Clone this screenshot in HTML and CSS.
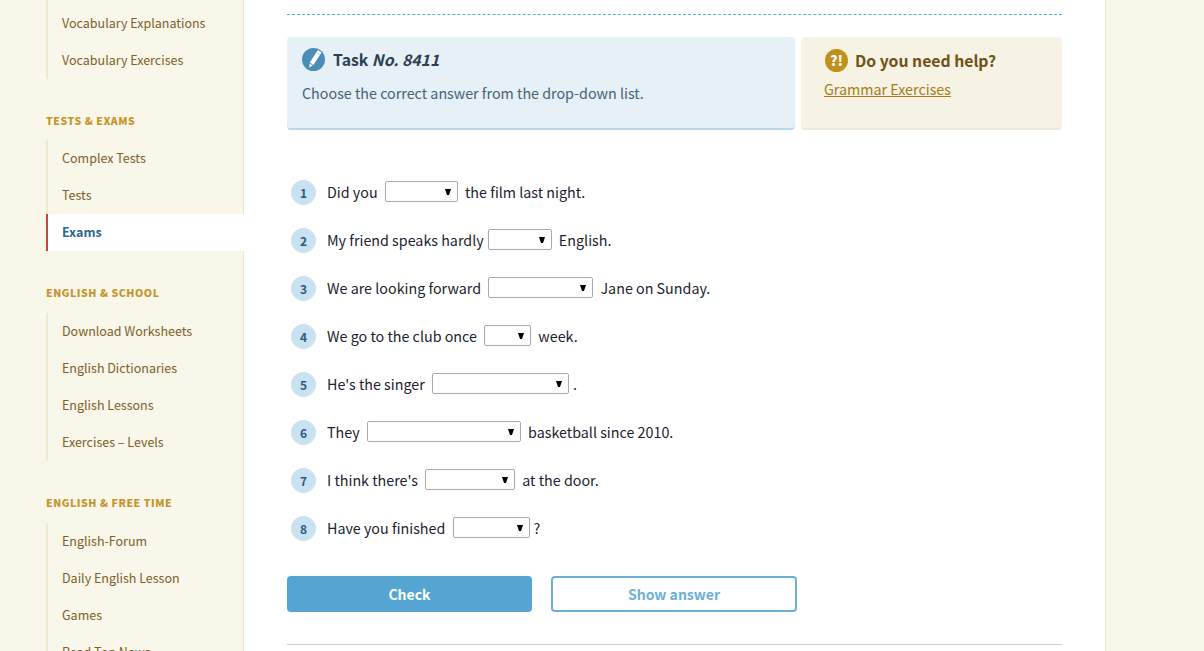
FILE: index.html
```html
<!DOCTYPE html>
<html lang="en">
<head>
<meta charset="utf-8">
<title>Task No. 8411</title>
<link rel="stylesheet" href="styles.css">
</head>
<body>
<div class="page">
  <nav class="sidebar">
    <ul class="menu menu-first">
      <li><a href="#">Vocabulary Explanations</a></li>
      <li><a href="#">Vocabulary Exercises</a></li>
    </ul>
    <h2 class="menu-title">Tests &amp; Exams</h2>
    <ul class="menu">
      <li><a href="#">Complex Tests</a></li>
      <li><a href="#">Tests</a></li>
      <li class="active"><a href="#">Exams</a></li>
    </ul>
    <h2 class="menu-title">English &amp; School</h2>
    <ul class="menu">
      <li><a href="#">Download Worksheets</a></li>
      <li><a href="#">English Dictionaries</a></li>
      <li><a href="#">English Lessons</a></li>
      <li><a href="#">Exercises – Levels</a></li>
    </ul>
    <h2 class="menu-title menu-title-last">English &amp; Free Time</h2>
    <ul class="menu">
      <li><a href="#">English-Forum</a></li>
      <li><a href="#">Daily English Lesson</a></li>
      <li><a href="#">Games</a></li>
      <li><a href="#">Read Top News</a></li>
    </ul>
  </nav>
  <main class="main">
    <div class="dashed"></div>
    <div class="cards">
      <section class="card task">
        <h1 class="card-title">
          <svg class="icon" viewBox="0 0 23 23" aria-hidden="true">
            <circle cx="11.5" cy="11.5" r="11.5" fill="#4a8db7"/>
            <path d="M15.85 2.1l3.7 2.4-8.1 12.5-3.7-2.4z" fill="#fff"/>
            <path d="M7.6 15.6l3 2-3.3 1.9z" fill="#fff"/>
            <path d="M14.6 4.7l3.4 2.2" stroke="#a9cbe0" stroke-width="0.7" fill="none"/>
          </svg>
          <span>Task <i>No. 8411</i></span>
        </h1>
        <p class="task-text">Choose the correct answer from the drop-down list.</p>
      </section>
      <aside class="card help">
        <h2 class="help-title"><span class="help-icon">?!</span>Do you need help?</h2>
        <a class="help-link" href="#">Grammar Exercises</a>
      </aside>
    </div>
    <ol class="questions">
      <li><span class="num">1</span><p>Did you <select class="s73"><option></option></select> the film last night.</p></li>
      <li><span class="num">2</span><p>My friend speaks hardly<select class="s64"><option></option></select> English.</p></li>
      <li><span class="num">3</span><p>We are looking forward <select class="s105"><option></option></select> Jane on Sunday.</p></li>
      <li><span class="num">4</span><p>We go to the club once <select class="s47"><option></option></select> week.</p></li>
      <li><span class="num">5</span><p>He's the singer <select class="s137"><option></option></select>.</p></li>
      <li><span class="num">6</span><p>They <select class="s154"><option></option></select> basketball since 2010.</p></li>
      <li><span class="num">7</span><p>I think there's <select class="s90"><option></option></select> at the door.</p></li>
      <li><span class="num">8</span><p>Have you finished <select class="s77"><option></option></select>?</p></li>
    </ol>
    <div class="actions">
      <button class="btn btn-primary" type="button">Check</button>
      <button class="btn btn-outline" type="button">Show answer</button>
    </div>
    <hr class="rule">
  </main>
  <div class="aside-space"></div>
</div>
</body>
</html>
```
FILE: styles.css
```css
* { box-sizing: border-box; }
html, body { margin: 0; height: 651px; overflow: hidden; }
body {
  background: #f9f6ea;
  font-family: "Noto Sans CJK SC", "Noto Sans", sans-serif;
  color: #1c2230;
}
.page { display: flex; align-items: stretch; height: 651px; }

.sidebar {
  width: 244px;
  flex: none;
  padding-left: 46px;
  border-right: 1px solid #ebe5d3;
}
.menu {
  list-style: none;
  margin: 0;
  padding: 0;
  border-left: 2px solid #f0e9cf;
}
.menu-first { padding-top: 5px; }
.menu li { height: 37px; display: flex; align-items: center; padding: 0 0 2px 14px; }
.menu a { color: #7b6128; text-decoration: none; font-size: 12.5px; line-height: 35px; }
.menu li.active {
  background: #fff;
  border-left: 2px solid #c9463f;
  margin-left: -2px;
  margin-right: -1px;
}
.menu li.active a { color: #2f6391; font-weight: 700; }
.menu-title {
  margin: 32px 0 9.4px;
  font-size: 10.5px;
  line-height: 20px;
  font-weight: 900;
  letter-spacing: 0.55px;
  text-transform: uppercase;
  color: #c4952c;
}
.menu-title-last { margin: 32.2px 0 10px; }

.main {
  width: 862px;
  flex: none;
  background: #fff;
  padding: 14px 43px 0;
  border-right: 1px solid #ebe5d3;
}
.dashed { border-top: 1px dashed #4db0e0; height: 1px; }
.cards { display: flex; gap: 6px; margin-top: 22px; }
.card { height: 93px; border-radius: 4px; border-bottom: 2px solid; }
.task { width: 508px; background: #e5f0f7; border-color: #b9d8ec; padding: 11px 15px; }
.help { width: 261px; background: #f6f2e4; border-color: #f0e9d5; padding: 12px 23px; }
.card-title {
  display: flex;
  align-items: center;
  gap: 8px;
  margin: 0;
  font-size: 15.75px;
  line-height: 23px;
  font-weight: 700;
  color: #2a4052;
}
.icon { width: 23px; height: 23px; flex: none; }
.task-text { margin: 10px 0 0; font-size: 14.3px; line-height: 24px; color: #466272; }
.help-title {
  display: flex;
  align-items: center;
  gap: 7px;
  margin: 0;
  font-size: 15.75px;
  line-height: 23px;
  font-weight: 700;
  color: #6f5314;
}
.help-icon {
  width: 23px;
  height: 23px;
  margin-left: 1px;
  border-radius: 50%;
  background: #bf9118;
  color: #fff;
  font-size: 14px;
  font-weight: 900;
  line-height: 23px;
  text-align: center;
}
.help-link { display: inline-block; margin-top: 7px; font-size: 14.3px; line-height: 20px; color: #a67c14; text-decoration: underline; }

.questions { list-style: none; margin: 38px 0 0; padding: 0 0 0 4px; }
.questions li { display: flex; align-items: center; gap: 11px; height: 48px; }
.questions p { margin: 0; font-size: 14.3px; line-height: 24px; white-space: nowrap; }
.num {
  width: 25px;
  height: 25px;
  flex: none;
  border-radius: 50%;
  background: #c9e2f1;
  color: #2d5b7e;
  font-size: 12px;
  font-weight: 700;
  line-height: 25px;
  text-align: center;
}
select {
  appearance: none;
  height: 21px;
  margin: 0 4px;
  padding: 0;
  vertical-align: 2px;
  background: #fff url("data:image/svg+xml,%3Csvg xmlns='http://www.w3.org/2000/svg' width='6' height='6'%3E%3Cpath d='M0 0h6L4 6H2z' fill='%23000'/%3E%3C/svg%3E") no-repeat right 6px center;
  border: 1px solid #a9a9a9;
  border-radius: 2px;
  font-size: 13px;
}
.s47 { width: 47px; }
.s64 { width: 64px; }
.s73 { width: 73px; }
.s77 { width: 77px; }
.s90 { width: 90px; }
.s105 { width: 105px; }
.s137 { width: 137px; }
.s154 { width: 154px; }

.actions { display: flex; gap: 19px; margin-top: 24px; }
.btn {
  width: 245px;
  height: 36px;
  border-radius: 4px;
  font-family: inherit;
  font-size: 14px;
  font-weight: 700;
  padding: 0;
}
.btn-primary { background: #55a5d3; border: 0; color: #fff; }
.btn-outline { width: 246px; background: #fff; border: 2px solid #6cb0da; color: #6cb0da; }
.rule { margin: 32px 0 0; border: 0; border-top: 1px solid #ccc; }
.aside-space { flex: 1; }
```
